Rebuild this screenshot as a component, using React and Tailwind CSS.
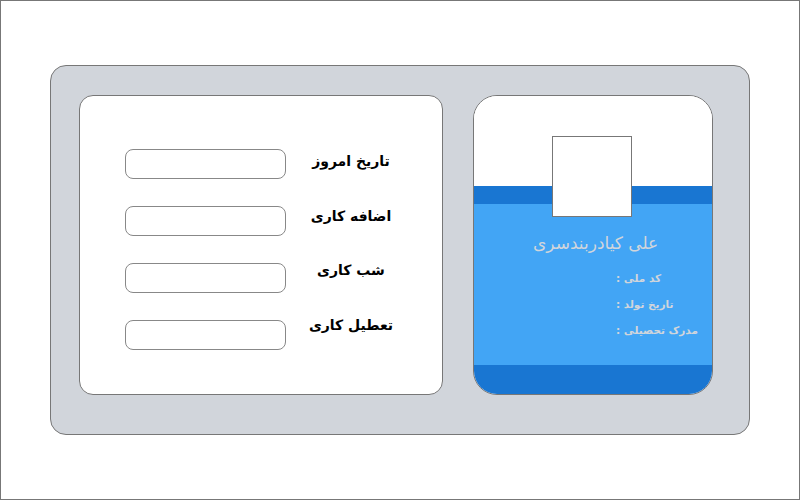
import React from 'react';

const rows = [
    { label: 'تاریخ امروز', lift: 'mt-[2px]' },
    { label: 'اضافه کاری', lift: 'mt-0' },
    { label: 'شب کاری', lift: '-mt-[3px]' },
    { label: 'تعطیل کاری', lift: '-mt-[5px]' },
];

function FormCard() {
    return (
        <div className="w-[364px] h-[300px] bg-white border border-[#777] rounded-[14px] pt-[53px] pl-[45px] flex flex-col gap-[27px]">
            {rows.map((r) => (
                <div key={r.label} className="flex items-start">
                    <div className="w-[161px] h-[30px] border border-[#888] rounded-[8px] bg-white" />
                    <div className={`ml-[10px] w-[110px] text-center text-[14px] font-bold text-black leading-[20px] ${r.lift}`} dir="rtl">
                        {r.label}
                    </div>
                </div>
            ))}
        </div>
    );
}

function IdCard() {
    return (
        <div className="w-[240px] h-[300px] rounded-[24px] border border-[#777] overflow-hidden flex flex-col bg-white">
            <div className="h-[90px] bg-white shrink-0" />
            <div className="h-[18px] bg-[#1976d2] shrink-0" />
            <div className="flex-1 bg-[#42a5f5] flex flex-col">
                <div className="pl-[59px] pt-[27px] text-[17px] leading-[24px] text-[#d1d5db]" dir="rtl">
                    <span className="block text-left">علی کیادربندسری</span>
                </div>
                <div className="pl-[142px] pt-[13px] flex flex-col gap-[6px] text-[10.5px] font-bold text-[#d1d5db] leading-[20px]">
                    <div dir="rtl" className="text-left">کد ملی :</div>
                    <div dir="rtl" className="text-left">تاریخ تولد :</div>
                    <div dir="rtl" className="text-left">مدرک تحصیلی :</div>
                </div>
            </div>
            <div className="h-[29px] bg-[#1976d2] shrink-0" />
        </div>
    );
}

export default function App() {
    return (
        <div className="w-[800px] h-[500px] bg-white border border-[#777] pt-[64px] pl-[49px]" style={{ fontFamily: '"DejaVu Sans", sans-serif' }}>
            <div className="w-[700px] h-[370px] bg-[#d1d5db] border border-[#777] rounded-[16px] pt-[29px] pl-[28px] flex gap-[30px]">
                <FormCard />
                <div className="relative">
                    <IdCard />
                    <div className="absolute left-[79px] top-[41px] w-[80px] h-[81px] bg-white border border-[#777]" />
                </div>
            </div>
        </div>
    );
}
